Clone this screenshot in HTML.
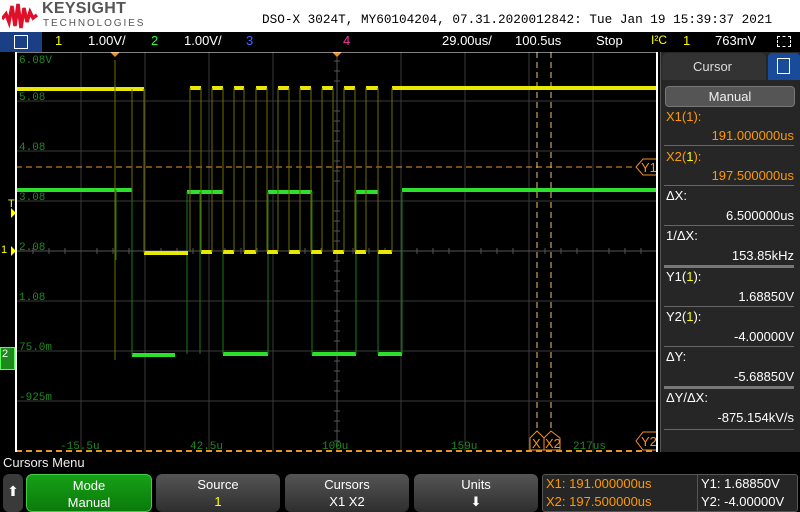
<!DOCTYPE html>
<html><head><meta charset="utf-8"><style>
*{margin:0;padding:0;box-sizing:border-box}
body{width:800px;height:512px;background:#000;font-family:"Liberation Sans",sans-serif;overflow:hidden;position:relative;color:#fff}
.a{position:absolute;white-space:nowrap}
.mono{font-family:"Liberation Mono",monospace}
.btn{position:absolute;top:474px;height:38px;border-radius:6px;background:linear-gradient(#555,#2e2e2e);text-align:center;font-size:13px;line-height:17px;padding-top:2px;color:#fff}
.row{position:absolute;left:664px;width:132px;font-size:13px}
.row .l{position:absolute;left:2px}
.row .v{position:absolute;right:2px}
.sep{position:absolute;left:664px;width:130px;height:1px;background:#666}
</style></head><body>
<div class="a" style="left:0;top:0;width:800px;height:32px;background:#fff"></div>
<svg class="a" style="left:2px;top:2px" width="36" height="28" viewBox="0 0 36 28"><path d="M0 17 L4 12 L7 20 L10 4 L13 24 L16 2 L19 26 L22 6 L25 20 L28 10 L31 16 L35 13" stroke="#e0102a" stroke-width="3.5" fill="none"/></svg>
<div class="a" style="left:42px;top:0px;font-size:16px;font-weight:bold;color:#555;letter-spacing:0.3px">KEYSIGHT</div>
<div class="a" style="left:43px;top:18px;font-size:10px;color:#555;letter-spacing:1.9px">TECHNOLOGIES</div>
<div class="a mono" style="left:262px;top:12px;font-size:12.7px;color:#000">DSO-X 3024T, MY60104204, 07.31.2020012842: Tue Jan 19 15:39:37 2021</div>
<div class="a" style="left:0;top:32px;width:42px;height:20px;background:#1a3f85"></div>
<div class="a" style="left:14px;top:35px;width:14px;height:14px;border:1.5px solid #fff"></div>
<div class="a" style="top:33px;left:0;font-size:13px;width:800px;height:18px">
<span class="a" style="left:55px;color:#ff0">1</span><span class="a" style="left:88px">1.00V/</span>
<span class="a" style="left:151px;color:#3f3">2</span><span class="a" style="left:184px">1.00V/</span>
<span class="a" style="left:246px;color:#46f">3</span><span class="a" style="left:343px;color:#f3a">4</span>
<span class="a" style="left:442px">29.00us/</span><span class="a" style="left:515px">100.5us</span>
<span class="a" style="left:596px">Stop</span><span class="a" style="left:651px;color:#ff0;font-size:12px">I²C</span>
<span class="a" style="left:683px;color:#ff0">1</span><span class="a" style="left:715px">763mV</span></div>
<div class="a" style="left:777px;top:36px;width:14px;height:11px;border:1px dashed #fff"></div>
<svg class="a" style="left:0;top:52px" width="660" height="400" viewBox="0 52 660 400">
<g stroke="#3a3a3a" stroke-width="1">
<path d="M81 52V452M145 52V452M209 52V452M273 52V452M401 52V452M465 52V452M529 52V452M593 52V452"/>
<path d="M16 101H657M16 151H657M16 201H657M16 301H657M16 351H657M16 401H657"/>
<path d="M16 251H657M337 52V452" stroke="#555"/>
</g>
<g stroke="#555"><path d="M334 61H340M334 71H340M334 81H340M334 111H340M334 121H340M334 131H340M334 141H340M334 161H340M334 171H340M334 181H340M334 211H340M334 221H340M334 231H340M334 241H340M334 261H340M334 271H340M334 281H340M334 291H340M334 311H340M334 321H340M334 331H340M334 341H340M334 361H340M334 371H340M334 381H340M334 391H340M334 411H340M334 421H340M334 431H340M334 441H340"/>
<path d="M33 248V254M49 248V254M65 248V254M97 248V254M113 248V254M129 248V254M161 248V254M177 248V254M193 248V254M225 248V254M241 248V254M257 248V254M289 248V254M305 248V254M321 248V254M353 248V254M369 248V254M385 248V254M417 248V254M433 248V254M449 248V254M481 248V254M497 248V254M513 248V254M545 248V254M561 248V254M577 248V254M609 248V254M625 248V254M641 248V254"/></g>
<g font-family="Liberation Mono" font-size="11" fill="#1f8a1f">
<text x="19" y="63">6.08V</text><text x="19" y="100">5.08</text><text x="19" y="150">4.08</text><text x="19" y="200">3.08</text><text x="19" y="250">2.08</text><text x="19" y="300">1.08</text><text x="19" y="350">75.0m</text><text x="19" y="400">-925m</text>
<text x="60" y="449">-15.5u</text><text x="190" y="449">42.5u</text><text x="322" y="449">100u</text><text x="451" y="449">159u</text><text x="573" y="449">217us</text>
</g>
<path d="M16 167H657" stroke="#e8952a" stroke-dasharray="6 4"/>
<path d="M537 52V435M551 52V435" stroke="#f5c070" stroke-dasharray="6 4"/>
<path d="M16 451H657" stroke="#e8952a" stroke-width="2" stroke-dasharray="6 4"/>
<path d="M110 52L115 57L120 52Z M332 52L337 57L342 52Z" fill="#f09020"/>
<g stroke="#2ce02c" stroke-width="4" fill="none">
<path d="M17 190H132M132 355H175M187 192H223M223 354H268M268 192H312M312 354H356M356 192H378M378 354H402M402 190H657"/>
</g>
<g stroke="#1a7a1a" stroke-width="1"><path d="M132 190V355M187 192V354M223 192V354M268 192V354M312 192V354M356 192V354M378 192V354M402 192V354M116 190V260M200 192V354"/></g>
<g stroke="#e8e800" stroke-width="4" fill="none">
<path d="M17 89H144M144 253H188M190 88H201M212 88H223M234 88H244M256 88H267M278 88H289M300 88H311M322 88H333M344 88H355M366 88H378M392 88H657"/>
<path d="M201 252H212M223 252H234M244 252H256M267 252H278M289 252H300M311 252H322M333 252H344M355 252H366M378 252H392"/>
</g>
<g stroke="#6e6e00" stroke-width="1"><path d="M144 89V253M190 88V252M201 88V252M212 88V252M223 88V252M234 88V252M244 88V252M256 88V252M267 88V252M278 88V252M289 88V252M300 88V252M311 88V252M322 88V252M333 88V252M344 88V252M355 88V252M366 88V252M378 88V252M392 88V252M115 60V360M132 89V200"/></g>
<g stroke="#f09020" fill="#000" stroke-width="1"><path d="M530 450V438L537 431L544 438V450Z M544 450V438L551 431L560 438V450Z M657 432H643L636 441L643 450H657"/></g>
<g font-size="13" fill="#f09020"><text x="532" y="448">X</text><text x="545" y="448">X2</text><text x="641" y="446">Y2</text></g>
<path d="M636 167L643 159H657V175H643Z" stroke="#f09020" fill="#000"/>
<text x="641" y="172" font-size="13" fill="#f09020">Y1</text>
<path d="M16 52V452M657 52V452" stroke="#fff" stroke-width="2"/>
<path d="M16 52H657" stroke="#fff" stroke-width="1"/>
</svg>
<div class="a" style="left:8px;top:198px;color:#ff0;font-size:11px">T</div>
<div class="a" style="left:11px;top:208px;width:0;height:0;border-left:5px solid #ff0;border-top:5px solid transparent;border-bottom:5px solid transparent"></div>
<div class="a" style="left:1px;top:244px;color:#ff0;font-size:11px">1</div>
<div class="a" style="left:11px;top:246px;width:0;height:0;border-left:5px solid #ff0;border-top:5px solid transparent;border-bottom:5px solid transparent"></div>
<div class="a" style="left:0;top:347px;width:15px;height:23px;background:#1b8a1b;border:1px solid #5f5;color:#fff;font-size:11px;padding-left:1px">2</div>
<div class="a" style="left:660px;top:52px;width:140px;height:400px;background:#262626;border-left:1px solid #555"></div>
<div class="a" style="left:662px;top:53px;width:104px;height:27px;background:#333;border-radius:5px 5px 0 0"></div>
<div class="a" style="left:693px;top:59px;font-size:13px;color:#ddd">Cursor</div>
<div class="a" style="left:768px;top:53px;width:32px;height:27px;background:#1a4a9a;border-radius:4px 4px 0 0"></div>
<div class="a" style="left:777px;top:58px;width:13px;height:16px;border:1.5px solid #fff"></div>
<div class="a" style="left:665px;top:86px;width:130px;height:21px;background:#555;border-radius:4px;border:1px solid #777;text-align:center;font-size:13px;line-height:19px;color:#eee">Manual</div>
<div class="row" style="top:109px"><span class="l" style="color:#f90">X1(1):</span></div>
<div class="row" style="top:128px"><span class="v" style="color:#f90">191.000000us</span></div>
<div class="sep" style="top:145px"></div>
<div class="row" style="top:149px"><span class="l" style="color:#f90">X2(<span style="color:#ff0">1</span>):</span></div>
<div class="row" style="top:168px"><span class="v" style="color:#f90">197.500000us</span></div>
<div class="sep" style="top:185px"></div>
<div class="row" style="top:188px"><span class="l">ΔX:</span></div>
<div class="row" style="top:208px"><span class="v">6.500000us</span></div>
<div class="sep" style="top:225px"></div>
<div class="row" style="top:228px"><span class="l">1/ΔX:</span></div>
<div class="row" style="top:248px"><span class="v">153.85kHz</span></div>
<div class="sep" style="top:265px;height:3px;background:#777"></div>
<div class="row" style="top:269px"><span class="l">Y1(<span style="color:#ff0">1</span>):</span></div>
<div class="row" style="top:289px"><span class="v">1.68850V</span></div>
<div class="sep" style="top:306px"></div>
<div class="row" style="top:309px"><span class="l">Y2(<span style="color:#ff0">1</span>):</span></div>
<div class="row" style="top:329px"><span class="v">-4.00000V</span></div>
<div class="sep" style="top:346px"></div>
<div class="row" style="top:349px"><span class="l">ΔY:</span></div>
<div class="row" style="top:369px"><span class="v">-5.68850V</span></div>
<div class="sep" style="top:386px;height:3px;background:#777"></div>
<div class="row" style="top:390px"><span class="l">ΔY/ΔX:</span></div>
<div class="row" style="top:410px"><span class="v">-875.154kV/s</span></div>
<div class="sep" style="top:429px"></div>
<div class="a" style="left:3px;top:455px;font-size:13px;color:#eee">Cursors Menu</div>
<div class="btn" style="left:3px;width:20px;background:#3a3a3a;font-size:14px;padding-top:9px">⬆</div>
<div class="btn" style="left:26px;width:126px;background:linear-gradient(#17a017,#0a7a0a);border:1px solid #4c4">Mode<br>Manual</div>
<div class="btn" style="left:156px;width:124px">Source<br><span style="color:#ff0">1</span></div>
<div class="btn" style="left:285px;width:124px">Cursors<br>X1 X2</div>
<div class="btn" style="left:414px;width:124px">Units<br>⬇</div>
<div class="a" style="left:542px;top:474px;width:256px;height:38px;background:#262626;border:1px solid #555;border-radius:3px"></div>
<div class="a" style="left:697px;top:474px;width:1px;height:38px;background:#555"></div>
<div class="a" style="left:546px;top:475px;font-size:13px;color:#f90;line-height:18px">X1: 191.000000us<br>X2: 197.500000us</div>
<div class="a" style="left:701px;top:475px;font-size:13px;color:#fff;line-height:18px">Y1: 1.68850V<br>Y2: -4.00000V</div>
</body></html>
